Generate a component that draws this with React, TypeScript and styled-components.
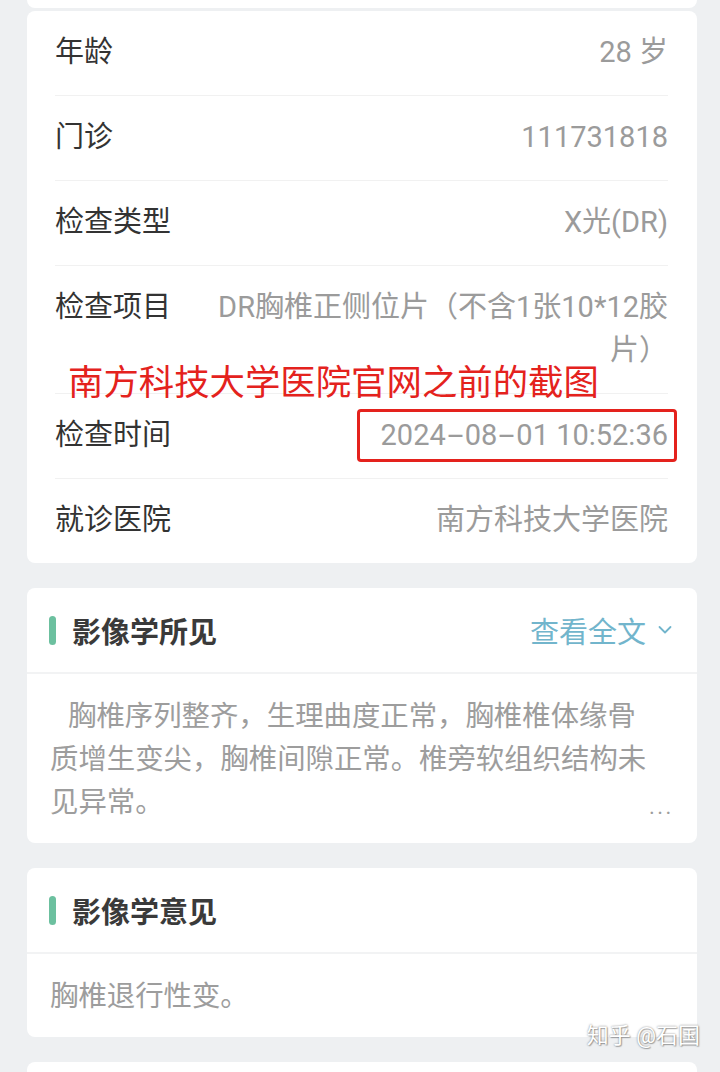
import styled, { createGlobalStyle } from "styled-components";

const GlobalStyle = createGlobalStyle`
  html, body {
    margin: 0;
    padding: 0;
    background: #eef0f2;
  }
  body {
    font-family: Roboto, "Noto Sans CJK SC", "Noto Sans", sans-serif;
    -webkit-font-smoothing: antialiased;
  }
`;

const Page = styled.div`
  position: relative;
  height: 1072px;
  overflow: hidden;
  padding: 0 23px 0 27px;
  display: flex;
  flex-direction: column;
`;

const Card = styled.section<{ $gap?: number }>`
  background: #fff;
  border-radius: 8px;
  margin-top: ${(p) => p.$gap ?? 25}px;
  flex-shrink: 0;
`;

const PrevCardEnd = styled.div`
  height: 8px;
  background: #fff;
  border-radius: 0 0 8px 8px;
  flex-shrink: 0;
`;

const Row = styled.div`
  display: flex;
  align-items: flex-start;
  justify-content: space-between;
  margin: 0 29px 0 28px;
  padding: 20px 0 21px;
  border-bottom: 1px solid #f1f1f1;
  line-height: 43px;
  font-size: 29px;

  &:last-child {
    border-bottom: none;
  }
`;

const Label = styled.div`
  color: #333;
  flex-shrink: 0;
  white-space: nowrap;
`;

const Value = styled.div`
  color: #9b9b9b;
  text-align: right;
  margin-left: 46px;
  white-space: nowrap;
`;

// the source font draws the date hyphens as long dashes
const Dash = styled.span`
  display: inline-block;
  width: 19px;
  text-align: center;
  transform: scaleX(2);
`;

const Header = styled.div`
  height: 84px;
  display: flex;
  align-items: center;
  justify-content: space-between;
  padding: 0 25px 0 22px;
  border-bottom: 2px solid #f2f3f4;
`;

const Title = styled.h2`
  margin: 0;
  display: flex;
  align-items: center;
  gap: 16px;
  font-size: 29px;
  font-weight: 700;
  color: #3a3a3a;

  &::before {
    content: "";
    width: 7px;
    height: 29px;
    border-radius: 4px;
    background: #6cc09f;
  }
`;

const MoreLink = styled.div`
  display: flex;
  align-items: center;
  gap: 12px;
  font-size: 29px;
  color: #72b5cc;
`;

const Body = styled.div`
  display: flex;
  align-items: flex-end;
  padding: 21px 25px 19px 23px;
  font-size: 28.4px;
  line-height: 43px;
  color: #9d9d9d;
`;

const Paragraph = styled.p<{ $indent?: boolean }>`
  flex: 1;
  margin: 0;
  text-indent: ${(p) => (p.$indent ? "18px" : "0")};
`;

const Ellipsis = styled.span`
  flex-shrink: 0;
  width: 23px;
  font-size: 22px;
  line-height: 34px;
  letter-spacing: 2.4px;
`;

const Annotation = styled.div`
  position: absolute;
  left: 68px;
  top: 361px;
  font-size: 35.4px;
  line-height: 44px;
  color: #e4221d;
  white-space: nowrap;
`;

const Highlight = styled.div`
  position: absolute;
  left: 357px;
  top: 409px;
  width: 320px;
  height: 53px;
  box-sizing: border-box;
  border: 3px solid #e4221d;
  border-radius: 4px;
`;

const Watermark = styled.div`
  position: absolute;
  right: 20px;
  top: 1021px;
  font-size: 22px;
  line-height: 30px;
  color: #fff;
  text-shadow: 0 0 2px rgba(0, 0, 0, 0.5), 1px 1px 1px rgba(0, 0, 0, 0.25);
  white-space: nowrap;
`;

const Chevron = () => (
  <svg width="14" height="10" viewBox="0 0 14 10" fill="none">
    <polyline
      points="1.5,2 7,7.5 12.5,2"
      stroke="#72b5cc"
      strokeWidth="1.8"
      strokeLinecap="round"
      strokeLinejoin="round"
    />
  </svg>
);

const info: { label: string; value: React.ReactNode }[] = [
  { label: "年龄", value: "28 岁" },
  { label: "门诊", value: "111731818" },
  { label: "检查类型", value: "X光(DR)" },
  {
    label: "检查项目",
    value: (
      <>
        DR胸椎正侧位片（不含1张10*12胶
        <br />
        片）
      </>
    ),
  },
  {
    label: "检查时间",
    value: (
      <>
        2024<Dash>-</Dash>08<Dash>-</Dash>01 10:52:36
      </>
    ),
  },
  { label: "就诊医院", value: "南方科技大学医院" },
];

const App = () => {
  return (
    <>
      <GlobalStyle />
      <Page>
        <PrevCardEnd />
        <Card $gap={3}>
          {info.map((item) => (
            <Row key={item.label}>
              <Label>{item.label}</Label>
              <Value>{item.value}</Value>
            </Row>
          ))}
        </Card>

        <Card>
          <Header>
            <Title>影像学所见</Title>
            <MoreLink>
              查看全文
              <Chevron />
            </MoreLink>
          </Header>
          <Body>
            <Paragraph $indent>
              胸椎序列整齐，生理曲度正常，胸椎椎体缘骨质增生变尖，胸椎间隙正常。椎旁软组织结构未见异常。
            </Paragraph>
            <Ellipsis>...</Ellipsis>
          </Body>
        </Card>

        <Card>
          <Header>
            <Title>影像学意见</Title>
          </Header>
          <Body>
            <Paragraph>胸椎退行性变。</Paragraph>
          </Body>
        </Card>

        <Card>
          <Header />
        </Card>

        <Annotation>南方科技大学医院官网之前的截图</Annotation>
        <Highlight />
        <Watermark>知乎 @石国</Watermark>
      </Page>
    </>
  );
};

export default App;
